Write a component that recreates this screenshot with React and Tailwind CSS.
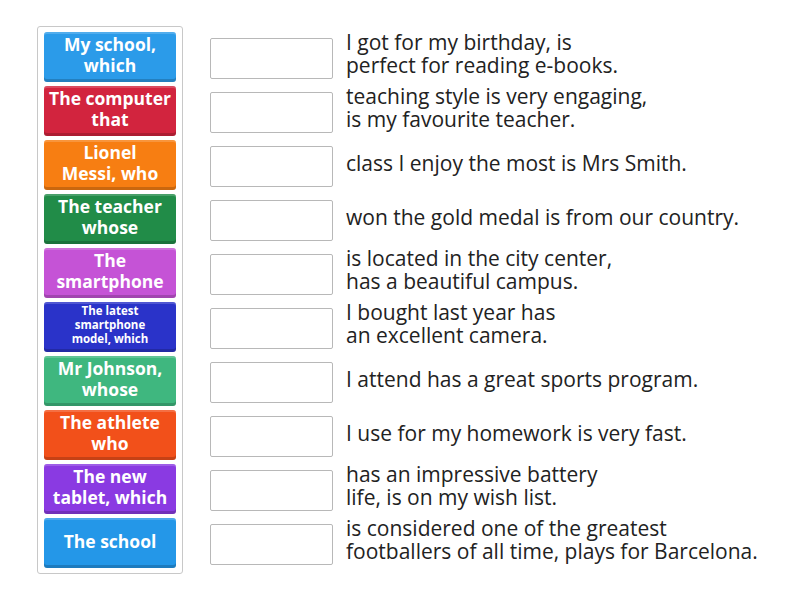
const tiles = [
  { lines: ['My school,', 'which'], bg: 'bg-[#2b9be9]' },
  { lines: ['The computer', 'that'], bg: 'bg-[#d2243e]' },
  { lines: ['Lionel', 'Messi, who'], bg: 'bg-[#f77e12]' },
  { lines: ['The teacher', 'whose'], bg: 'bg-[#218c48]' },
  { lines: ['The', 'smartphone'], bg: 'bg-[#c553d6]' },
  { lines: ['The latest', 'smartphone', 'model, which'], bg: 'bg-[#2a33c9]', small: true },
  { lines: ['Mr Johnson,', 'whose'], bg: 'bg-[#3fb77f]' },
  { lines: ['The athlete', 'who'], bg: 'bg-[#f2501a]' },
  { lines: ['The new', 'tablet, which'], bg: 'bg-[#8a3ae2]' },
  { lines: ['The school'], bg: 'bg-[#2497e8]' },
];

const endings = [
  ['I got for my birthday, is', 'perfect for reading e-books.'],
  ['teaching style is very engaging,', 'is my favourite teacher.'],
  ['class I enjoy the most is Mrs Smith.'],
  ['won the gold medal is from our country.'],
  ['is located in the city center,', 'has a beautiful campus.'],
  ['I bought last year has', 'an excellent camera.'],
  ['I attend has a great sports program.'],
  ['I use for my homework is very fast.'],
  ['has an impressive battery', 'life, is on my wish list.'],
  ['is considered one of the greatest', 'footballers of all time, plays for Barcelona.'],
];

// join lines with <br /> so each tile / ending stays one text block
function Lines({ lines }) {
  return lines.map((l, i) => (
    <span key={l}>
      {i > 0 && <br />}
      {l}
    </span>
  ));
}

export default function App() {
  return (
    <div className="w-[800px] h-[600px] bg-white flex" style={{ fontFamily: '"Open Sans", sans-serif' }}>
      {/* Tile column */}
      <div className="ml-[37px] mt-[26px] w-[146px] h-[548px] border border-[#c8c8c8] rounded-[3px] px-[6px] pt-[5px] flex flex-col gap-[4px]">
        {tiles.map((t, i) => (
          <div
            key={i}
            className={`${t.bg} h-[50px] w-[132px] rounded-[3px] flex items-center justify-center pb-[4px] text-center text-white font-bold shadow-[inset_0_2px_0_rgba(255,255,255,0.18),inset_0_-3px_0_rgba(0,0,0,0.18)] whitespace-nowrap ${t.small ? 'text-[11.5px] leading-[14px]' : 'text-[17.5px] leading-[21px]'}`}
          >
            <p>
              <Lines lines={t.lines} />
            </p>
          </div>
        ))}
      </div>

      {/* Answer rows */}
      <div className="ml-[27px] mt-[32px] flex flex-col">
        {endings.map((lines, i) => (
          <div key={i} className="h-[54px] flex items-center">
            <div className="w-[123px] h-[41px] border border-[#b8b8b8] rounded-[2px] bg-white shrink-0 mt-[-1px]" />
            <p className={`ml-[13px] text-[21px] leading-[23px] text-[#222] whitespace-nowrap ${lines.length > 1 ? 'mt-[-11px]' : 'mt-[-7px]'}`}>
              <Lines lines={lines} />
            </p>
          </div>
        ))}
      </div>
    </div>
  );
}
